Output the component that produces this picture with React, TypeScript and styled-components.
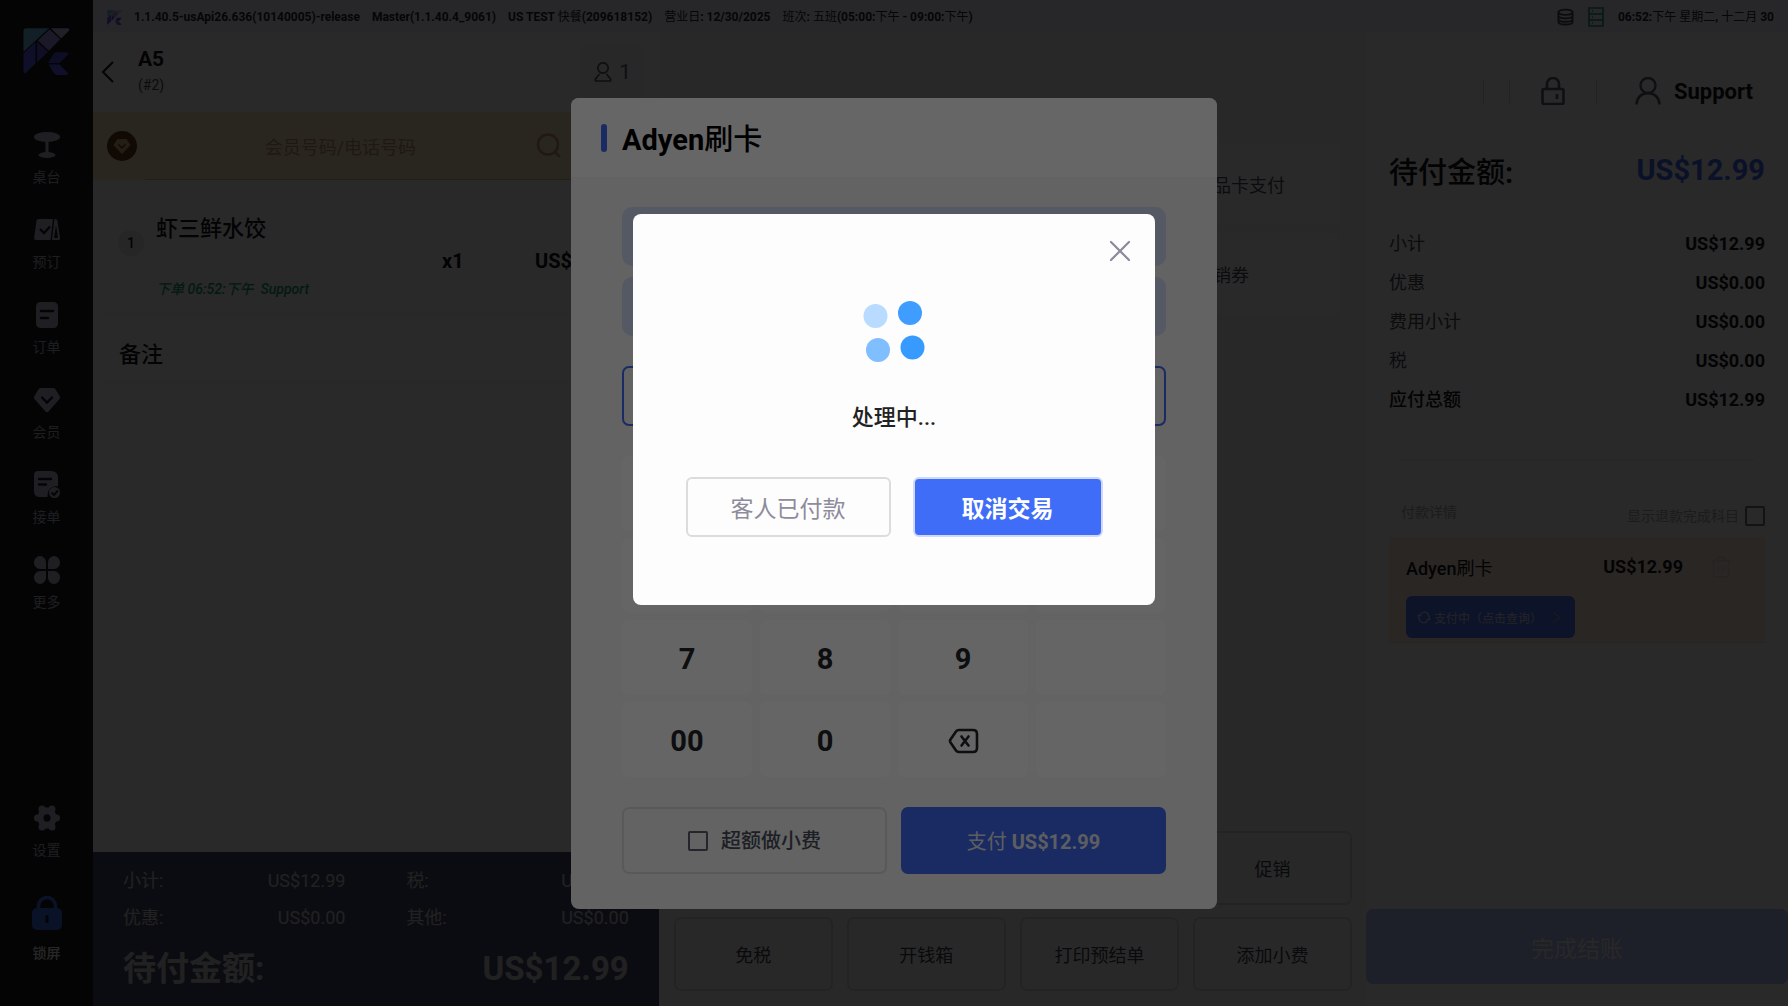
import React from "react";
import styled, { createGlobalStyle, css } from "styled-components";

const blue = "#406cf6";

const GlobalStyle = createGlobalStyle`
  * { box-sizing: border-box; }
  body {
    margin: 0;
    background: #f9f9f9;
    color: #14151a;
    font-family: Roboto, "Noto Sans CJK SC", sans-serif;
    font-size: 18px;
  }
  button, input { font: inherit; color: inherit; }
  button { border: 0; padding: 0; background: none; cursor: pointer; }
  h1, h2, p, dl, dd, dt { margin: 0; font-weight: inherit; font-size: inherit; }
  svg { display: block; flex: none; }
`;

/* Bold Latin text whose Han characters stay in a lighter weight */
const Han = styled.span<{ $weight: number }>`
  font-weight: ${(p) => p.$weight};
`;
const Mixed = ({ text, weight = 400 }: { text: string; weight?: number }) => (
  <span>
    {text.split(/([\u4e00-\u9fff]+)/).map((part, i) =>
      i % 2 ? <Han key={i} $weight={weight}>{part}</Han> : part
    )}
  </span>
);

const Shell = styled.div`
  display: grid;
  grid-template-columns: 93px 1fr;
  min-height: 100vh;
`;

/* Sidebar */
const Sidebar = styled.nav`
  display: flex;
  flex-direction: column;
  align-items: center;
  padding: 28px 0 43px;
  background: #1b1b1d;
`;
const NavGroup = styled.div<{ $bottom?: boolean }>`
  display: flex;
  flex-direction: column;
  align-items: center;
  gap: ${(p) => (p.$bottom ? 36 : 29)}px;
  margin-top: ${(p) => (p.$bottom ? "auto" : "56px")};
`;
const NavItem = styled.button<{ $strong?: boolean }>`
  display: flex;
  flex-direction: column;
  align-items: center;
  gap: ${(p) => (p.$strong ? 13 : 8)}px;
  font-size: 14px;
  line-height: 20px;
  font-weight: ${(p) => (p.$strong ? 500 : 400)};
  color: ${(p) => (p.$strong ? "#f0f0f0" : "#b4b8c8")};
`;

/* Workspace */
const Workspace = styled.div`
  display: grid;
  grid-template-rows: 32px 1fr;
  min-width: 0;
`;
const TopBar = styled.header`
  display: flex;
  align-items: center;
  gap: 12px;
  padding: 2px 14px 0;
  background: #eef0fb;
  font-size: 12px;
  line-height: 16px;
  font-weight: 700;
  color: #24252c;
  white-space: nowrap;
`;
const TopRight = styled.div`
  display: flex;
  align-items: center;
  gap: 14px;
  margin-left: auto;
`;
const Columns = styled.div`
  display: grid;
  grid-template-columns: 4fr 5fr 422px;
  min-height: 0;
`;

/* Order column */
const OrderPane = styled.section`
  display: flex;
  flex-direction: column;
  background: #fbfbfb;
`;
const OrderHead = styled.div`
  display: flex;
  align-items: center;
  height: 80px;
  padding-right: 14px;
`;
const BackButton = styled.button`
  width: 45px;
  padding-left: 8px;
`;
const TableName = styled.h1`
  font-size: 21px;
  line-height: 26px;
  font-weight: 700;
`;
const TableSub = styled.p`
  font-size: 14px;
  line-height: 26px;
  color: #4a4d5a;
`;
const GuestChip = styled.button`
  display: flex;
  align-items: center;
  justify-content: center;
  gap: 7px;
  width: 64px;
  height: 52px;
  margin-left: auto;
  border-radius: 6px;
  background: #f6f6f7;
  font-size: 21px;
  color: #5a5c6c;
`;
const MemberBar = styled.div`
  display: flex;
  align-items: center;
  height: 68px;
  padding: 0 98px 0 14px;
  background: #faeac6;
  color: #c8966a;
`;
const MemberField = styled.label`
  display: flex;
  flex: 1;
  align-items: center;
  height: 68px;
  margin-left: 8px;
  margin-right: -98px;
  padding-right: 98px;
  border-bottom: 1px solid #d9c08a;
`;
const MemberInput = styled.input`
  flex: 1;
  min-width: 0;
  border: 0;
  outline: 0;
  padding: 4px 0 0;
  background: none;
  text-align: center;
  line-height: 26px;
  &::placeholder { color: #c8966a; opacity: 1; }
`;
const OrderItem = styled.article`
  display: flex;
  gap: 12px;
  height: 134px;
  margin-left: 11px;
  padding: 34px 35px 0 14px;
  border-bottom: 1px solid #efefef;
`;
const ItemIndex = styled.span`
  flex: none;
  width: 26px;
  height: 26px;
  margin-top: 16px;
  border-radius: 50%;
  background: #e9e9eb;
  text-align: center;
  font-size: 14px;
  font-weight: 500;
  line-height: 26px;
`;
const ItemBody = styled.div`
  flex: 1;
`;
const ItemName = styled.h2`
  font-size: 22px;
  line-height: 30px;
  font-weight: 500;
`;
const ItemFigures = styled.p`
  display: flex;
  justify-content: flex-end;
  font-size: 20px;
  line-height: 34px;
  font-weight: 700;
  span:last-child { width: 160px; text-align: right; }
`;
const ItemMeta = styled.p`
  font-size: 14px;
  line-height: 22px;
  font-style: italic;
  font-weight: 500;
  color: #14a078;
`;
const Remark = styled.button`
  height: 69px;
  margin-left: 11px;
  padding: 8px 0 0 15px;
  background: #ffffff;
  border-bottom: 1px solid #f1f1f1;
  text-align: left;
  font-size: 22px;
  font-weight: 500;
`;
const OrderTotals = styled.div`
  margin-top: auto;
  padding: 10px 30px 4px 30px;
  background: #484e69;
  color: #cfcfd2;
`;
const TotalsGrid = styled.dl`
  display: grid;
  grid-template-columns: 1fr 1fr;
  column-gap: 61px;
`;
const Pair = styled.div<{ $grand?: boolean }>`
  display: flex;
  justify-content: space-between;
  line-height: 37px;
  ${(p) =>
    p.$grand &&
    css`
      grid-column: 1 / -1;
      font-size: 33px;
      line-height: 66px;
      font-weight: 700;
    `}
`;

/* Payment method column */
const MethodPane = styled.section`
  display: flex;
  flex-direction: column;
  justify-content: space-between;
  padding: 111px 14px 15px 15px;
  background: #f9f9f9;
`;
const MethodCards = styled.div`
  display: grid;
  grid-auto-rows: 82px;
  gap: 8px;
  width: 198px;
  margin: 0 13px 0 auto;
`;
const MethodCard = styled.button`
  display: flex;
  align-items: center;
  gap: 12px;
  padding-left: 18px;
  border-radius: 8px;
  background: #ffffff;
  color: #4a4d5a;
`;
const ActionGrid = styled.div`
  display: grid;
  grid-template-columns: repeat(4, 1fr);
  grid-auto-rows: 74px;
  gap: 12px 14px;
`;
const ActionButton = styled.button<{ $col?: number }>`
  grid-column: ${(p) => p.$col ?? "auto"};
  border: 2px solid #d9dadd;
  border-radius: 7px;
  color: #3c3f48;
`;

/* Summary column */
const SummaryPane = styled.section`
  display: flex;
  flex-direction: column;
  background: #fbfbfb;
  padding-bottom: 22px;
`;
const AccountBar = styled.div`
  display: flex;
  align-items: center;
  justify-content: flex-end;
  height: 118px;
  padding-right: 35px;
`;
const Rule = styled.span`
  width: 1px;
  height: 24px;
  background: #d4d4d8;
`;
const LockButton = styled.button`
  padding: 0 31px;
  color: #5c6074;
`;
const RuleGap = styled(Rule)`
  margin-right: 25px;
`;
const AccountButton = styled.button`
  display: flex;
  align-items: center;
  gap: 13px;
  margin-left: 38px;
  font-size: 22px;
  font-weight: 700;
  svg { color: #5c6074; }
`;
const SummaryBody = styled.div`
  padding: 0 23px;
`;
const Due = styled.div`
  display: flex;
  justify-content: space-between;
  font-size: 29px;
  font-weight: 700;
`;
const DueLabel = styled.span`
  line-height: 46px;
`;
const DueAmount = styled.span`
  line-height: 40px;
  color: ${blue};
`;
const Lines = styled.dl`
  margin: 28px 0 40px;
`;
const Line = styled.div<{ $strong?: boolean }>`
  display: flex;
  justify-content: space-between;
  line-height: 39px;
  dt { color: ${(p) => (p.$strong ? "#14151a" : "#4a4d55")}; font-weight: ${(p) => (p.$strong ? 500 : 400)}; }
  dd { font-weight: 700; }
`;
const Separator = styled.hr`
  height: 2px;
  margin: 0 11px 40px;
  border: 0;
  background: #eeeeee;
`;
const DetailHead = styled.div`
  display: flex;
  justify-content: space-between;
  padding-left: 12px;
  margin-bottom: 6px;
  font-size: 14px;
  line-height: 22px;
  color: #a9abb4;
`;
const RefundToggle = styled.label`
  display: flex;
  align-items: center;
  gap: 6px;
  line-height: 30px;
`;
const Check = styled.input<{ $tone: string }>`
  appearance: none;
  width: 20px;
  height: 20px;
  margin: 0;
  border: 2px solid ${(p) => p.$tone};
  border-radius: 2px;
`;
const PaymentCard = styled.div`
  padding: 0 34px 4px 17px;
  border-bottom: 1px solid #e2e2e2;
  background: #ffeadb;
`;
const PaymentRow = styled.div`
  display: flex;
  align-items: center;
  height: 59px;
  font-weight: 700;
  > span:first-child { font-weight: 500; }
  > span + span { margin-left: auto; }
  button { margin-left: 28px; color: #e3dbd6; }
`;
const QueryButton = styled.button`
  display: flex;
  align-items: center;
  gap: 3px;
  width: 169px;
  height: 42px;
  padding: 0 14px 0 11px;
  border-radius: 6px;
  background: #5074f4;
  color: #c9d2f4;
  font-size: 12px;
  font-weight: 500;
  svg:last-child { margin-left: auto; }
`;
const FinishButton = styled.button`
  height: 75px;
  margin-top: auto;
  border-radius: 7px;
  background: #b5c2fa;
  color: #f4f4f2;
  font-size: 23px;
`;

/* Overlays */
const Scrim = styled.div<{ $top?: boolean }>`
  position: fixed;
  inset: 0;
  display: flex;
  justify-content: center;
  align-items: ${(p) => (p.$top ? "flex-start" : "center")};
  padding-top: ${(p) => (p.$top ? 214 : 0)}px;
  background: rgba(0, 0, 0, 0.6);
`;
const PayModal = styled.section`
  width: 646px;
  border-radius: 8px;
  overflow: hidden;
  background: #f7f7f7;
`;
const PayHead = styled.header`
  display: flex;
  align-items: center;
  gap: 15px;
  height: 79px;
  padding: 2px 30px 0;
  background: #ffffff;
  &::before {
    content: "";
    width: 6px;
    height: 28px;
    border-radius: 3px;
    background: ${blue};
  }
`;
const PayTitle = styled.h1`
  padding-top: 4px;
  font-size: 29px;
  line-height: 42px;
  font-weight: 700;
  color: #000000;
`;
const PayBody = styled.div`
  display: flex;
  flex-direction: column;
  gap: 30px;
  padding: 30px 51px 35px;
`;
const InfoRows = styled.div`
  display: grid;
  grid-auto-rows: 59px;
  gap: 11px;
`;
const InfoRow = styled.div`
  border-radius: 10px;
  background: #d5dffa;
`;
const AmountInput = styled.input`
  width: 100%;
  height: 60px;
  padding: 0 20px;
  border: 2px solid ${blue};
  border-radius: 7px;
  background: #f7f7f7;
`;
const Keypad = styled.div`
  display: grid;
  grid-template-columns: repeat(4, 1fr);
  grid-auto-rows: 75px;
  gap: 7px 8px;
`;
const Key = styled.button`
  display: flex;
  align-items: center;
  justify-content: center;
  padding-top: 4px;
  border-radius: 7px;
  background: #fdfdfd;
  font-size: 29px;
  font-weight: 700;
  color: #22242a;
`;
const PayActions = styled.div`
  display: grid;
  grid-template-columns: 1fr 1fr;
  gap: 14px;
  font-size: 20px;
  line-height: 30px;
`;
const TipToggle = styled.label`
  display: flex;
  align-items: center;
  justify-content: center;
  gap: 13px;
  height: 67px;
  padding-top: 2px;
  border: 2px solid #dfdfdf;
  border-radius: 7px;
  font-weight: 500;
  color: #4a4f5c;
`;
const PayButton = styled.button`
  padding-top: 4px;
  border-radius: 7px;
  background: ${blue};
  color: #e9ebf2;
  font-weight: 700;
`;

const Dialog = styled.section`
  display: flex;
  flex-direction: column;
  align-items: center;
  width: 522px;
  padding: 26px 24px 68px;
  border-radius: 8px;
  background: #fdfdfd;
`;
const CloseButton = styled.button`
  align-self: flex-end;
  color: #8c8a9c;
`;
const Spinner = styled.svg`
  margin: 38px 0 38px;
`;
const Status = styled.p`
  font-size: 22px;
  line-height: 36px;
  font-weight: 500;
  color: #222222;
`;
const DialogActions = styled.div`
  display: flex;
  gap: 22px;
  margin-top: 41px;
`;
const DialogButton = styled.button<{ $primary?: boolean }>`
  width: ${(p) => (p.$primary ? 190 : 205)}px;
  height: 60px;
  border: 2px solid ${(p) => (p.$primary ? "#cfd8f6" : "#dcdcde")};
  border-radius: 6px;
  background: ${(p) => (p.$primary ? "#3f6df7" : "#fdfdfd")};
  color: ${(p) => (p.$primary ? "#ffffff" : "#8e8c9c")};
  font-size: 23px;
  font-weight: ${(p) => (p.$primary ? 700 : 400)};
`;

/* Drawings */
const Logo = ({ size }: { size: number }) => (
  <svg width={size} height={size} viewBox="69 83 139 142" aria-hidden="true">
    <path d="M78 84H146L69 155V93Q69 84 78 84Z" fill="#78bfe8" />
    <path d="M148 87L180 117L146 152L112 121Z" fill="#a993ee" />
    <path d="M152 84H203Q210 86 206 91L183 115Z" fill="#cfc0f2" />
    <path d="M69 160L105 125V190L75 220Q69 223 69 215Z" fill="#6260fb" />
    <path d="M110 125L143 155L110 187Z" fill="#6458ea" />
    <path d="M168 156H199Q208 158 203 164L178 189H143L158 164Q162 157 168 156Z" fill="#5350e6" />
    <path d="M145 193H178L202 218Q207 224 198 225H172Q165 225 160 218Z" fill="#6260fb" />
  </svg>
);
const fillTone = "#bdc1d6";
const hole = "#1b1b1d";
const NavSvg = ({ children }: { children: React.ReactNode }) => (
  <svg width="28" height="28" viewBox="0 0 28 28" fill={fillTone} aria-hidden="true">{children}</svg>
);
const TableIcon = () => (
  <NavSvg>
    <ellipse cx="14" cy="6" rx="13" ry="5" />
    <rect x="12.5" y="9" width="3" height="15" />
    <ellipse cx="14" cy="24" rx="8.5" ry="3" />
  </NavSvg>
);
const BookIcon = () => (
  <NavSvg>
    <path d="M5.500 3H20l-2.500 21H3Q1 24 1.200 22L3.500 4.500Q4 3 5.500 3Z" />
    <path d="M21.500 3h1q1.500 0 1.800 1.500L27 22q.2 2-1.500 2H19Z" />
    <path d="M23 9l2 13h-4Z" fill={hole} />
    <path d="M7 13l4 4 6-6.500" fill="none" stroke={hole} strokeWidth="2.400" />
  </NavSvg>
);
const OrderIcon = () => (
  <NavSvg>
    <path d="M8 1H20q5 0 5 5V22q0 5-5 5H8q-5 0-5-5V6Q3 1 8 1Z" />
    <path d="M8 10H20M8 17H15" fill="none" stroke={hole} strokeWidth="2.600" strokeLinecap="round" />
  </NavSvg>
);
const Gem = ({ size, tone, mark }: { size: number; tone: string; mark: string }) => (
  <svg width={size} height={size} viewBox="0 0 28 28" aria-hidden="true">
    <path d="M8 2H20q1.500 0 2.300 1L26.500 10q1 1.500 0 3L15.500 25.500q-1.500 1.500-3 0L1.500 13q-1-1.500 0-3L5.700 3Q6.500 2 8 2Z" fill={tone} />
    <path d="M9 11.500l5 5 5-5" fill="none" stroke={mark} strokeWidth="2.400" strokeLinecap="round" />
  </svg>
);
const TakeIcon = () => (
  <NavSvg>
    <path d="M5 0H18q7 0 7 7V15Q14 15 14.500 26H7q-6 0-6-6V4Q1 0 5 0Z" />
    <path d="M6 8H18M6 13.500H13" fill="none" stroke={hole} strokeWidth="2.400" strokeLinecap="round" />
    <circle cx="21.500" cy="21.500" r="5.500" />
    <path d="M18.500 21.500l2.500 2.500 4-4.500" fill="none" stroke={hole} strokeWidth="2" />
  </NavSvg>
);
const MoreIcon = () => (
  <NavSvg>
    <path d="M13 13H7A6 6.500 0 1 1 13 6.500Z" />
    <path d="M15 13H21A6 6.500 0 1 0 15 6.500Z" />
    <path d="M13 15H7A6 6.500 0 1 0 13 21.500Z" />
    <path d="M15 15H21A6 6.500 0 1 1 15 21.500Z" />
  </NavSvg>
);
const GearIcon = () => (
  <NavSvg>
    <path
      d="M9.500 5.500H18.500L22.500 14L18.500 22.500H9.500L5.500 14Z"
      stroke={fillTone}
      strokeWidth="4"
      strokeLinejoin="round"
    />
    <circle cx="9" cy="5" r="3.500" />
    <circle cx="19" cy="5" r="3.500" />
    <circle cx="9" cy="23" r="3.500" />
    <circle cx="19" cy="23" r="3.500" />
    <circle cx="4.500" cy="14" r="3.500" />
    <circle cx="23.500" cy="14" r="3.500" />
    <ellipse cx="14" cy="14" rx="3.500" ry="3.800" fill={hole} />
  </NavSvg>
);
const BigLock = () => (
  <svg width="32" height="34" viewBox="0 0 32 34" aria-hidden="true">
    <path d="M7.500 14V10a8.500 8.500 0 0 1 17 0v4" fill="none" stroke="#4070f4" strokeWidth="3.500" />
    <rect x="1" y="12" width="30" height="22" rx="5" fill="#4070f4" />
    <rect x="14.500" y="19" width="3" height="8" rx="1.500" fill={hole} />
  </svg>
);

const navItems = [
  { label: "桌台", icon: <TableIcon /> },
  { label: "预订", icon: <BookIcon /> },
  { label: "订单", icon: <OrderIcon /> },
  { label: "会员", icon: <Gem size={28} tone={fillTone} mark={hole} /> },
  { label: "接单", icon: <TakeIcon /> },
  { label: "更多", icon: <MoreIcon /> },
];
const statusTexts = [
  "1.1.40.5-usApi26.636(10140005)-release",
  "Master(1.1.40.4_9061)",
  "US TEST 快餐(209618152)",
  "营业日: 12/30/2025",
  "班次: 五班(05:00:下午 - 09:00:下午)",
];
const orderTotals = [
  ["小计:", "US$12.99"],
  ["税:", "US$0.00"],
  ["优惠:", "US$0.00"],
  ["其他:", "US$0.00"],
];
const summaryLines = [
  ["小计", "US$12.99"],
  ["优惠", "US$0.00"],
  ["费用小计", "US$0.00"],
  ["税", "US$0.00"],
  ["应付总额", "US$12.99"],
];
const keys = ["1", "2", "3", "", "4", "5", "6", "", "7", "8", "9", "", "00", "0", "back", ""];

const BackspaceIcon = () => (
  <svg width="31" height="26" viewBox="0 0 31 26" fill="none" stroke="currentColor" strokeWidth="2.600" strokeLinejoin="round" strokeLinecap="round" aria-hidden="true">
    <path d="M11 2H25q4 0 4 4V20q0 4-4 4H11q-2 0-3-1.500L2.500 14.500q-1-1.500 0-3L8 3.500Q9 2 11 2Z" />
    <path d="M13.500 8.500l7 9M20.500 8.500l-7 9" />
  </svg>
);
const CardIcon = () => (
  <svg width="24" height="24" viewBox="0 0 24 24" fill="none" stroke={blue} strokeWidth="2" aria-hidden="true">
    <rect x="2" y="5" width="20" height="14" rx="2" />
    <path d="M2 10H22" />
  </svg>
);

export default function App() {
  return (
    <>
      <GlobalStyle />
      <Shell>
        <Sidebar>
          <Logo size={47} />
          <NavGroup>
            {navItems.map((n) => (
              <NavItem key={n.label}>{n.icon}{n.label}</NavItem>
            ))}
          </NavGroup>
          <NavGroup $bottom>
            <NavItem><GearIcon />设置</NavItem>
            <NavItem $strong><BigLock />锁屏</NavItem>
          </NavGroup>
        </Sidebar>

        <Workspace>
          <TopBar>
            <Logo size={15} />
            {statusTexts.map((t) => <Mixed key={t} text={t} />)}
            <TopRight>
              <svg width="17" height="18" viewBox="0 0 18 18" fill="none" stroke="#4c4c4c" strokeWidth="2" aria-hidden="true">
                <ellipse cx="9" cy="4" rx="7.500" ry="2.800" />
                <path d="M1.500 4V14q0 3 7.500 3t7.500-3V4M1.500 7.500q0 3 7.500 3t7.500-3M1.500 11q0 3 7.500 3t7.500-3" />
              </svg>
              <svg width="16" height="20" viewBox="0 0 16 20" fill="none" stroke="#1f9a80" strokeWidth="1.600" aria-hidden="true">
                <path d="M1 1H15V19H1ZM1 7H15M1 13H15M4 4H5M4 10H5M4 16H5" />
              </svg>
              <Mixed text="06:52:下午 星期二, 十二月 30" />
            </TopRight>
          </TopBar>

          <Columns>
            <OrderPane>
              <OrderHead>
                <BackButton aria-label="返回">
                  <svg width="13" height="22" viewBox="0 0 13 22" fill="none" stroke="#14151a" strokeWidth="2" aria-hidden="true">
                    <path d="M12 1L2 11L12 21" />
                  </svg>
                </BackButton>
                <div>
                  <TableName>A5</TableName>
                  <TableSub>(#2)</TableSub>
                </div>
                <GuestChip>
                  <svg width="18" height="20" viewBox="0 0 18 20" fill="none" stroke="currentColor" strokeWidth="1.700" aria-hidden="true">
                    <circle cx="9" cy="6" r="5.200" />
                    <path d="M5.500 12L1.500 17Q.5 19 2.500 19H15.500Q17.500 19 16.500 17L12.500 12" />
                  </svg>
                  1
                </GuestChip>
              </OrderHead>
              <MemberBar>
                <svg width="30" height="30" viewBox="0 0 30 30" aria-hidden="true">
                  <circle cx="15" cy="15" r="15" fill="#6a3a1a" />
                  <path d="M10.500 8H19.500L23.500 14L15 23L6.500 14Z" fill="#d8b878" />
                  <path d="M11.500 13.500l3.500 3.500 3.500-3.500" fill="none" stroke="#6a3a1a" strokeWidth="1.500" />
                </svg>
                <MemberField>
                  <MemberInput placeholder="会员号码/电话号码" aria-label="会员号码/电话号码" />
                  <svg width="25" height="25" viewBox="0 0 25 25" fill="none" stroke="currentColor" strokeWidth="2.400" aria-hidden="true">
                    <circle cx="12" cy="11.500" r="10" />
                    <path d="M19 19L24 24" />
                  </svg>
                </MemberField>
              </MemberBar>
              <OrderItem>
                <ItemIndex>1</ItemIndex>
                <ItemBody>
                  <ItemName>虾三鲜水饺</ItemName>
                  <ItemFigures><span>x1</span><span>US$12.99</span></ItemFigures>
                  <ItemMeta>下单 06:52:下午&nbsp; Support</ItemMeta>
                </ItemBody>
              </OrderItem>
              <Remark>备注</Remark>
              <OrderTotals>
                <TotalsGrid>
                  {orderTotals.map(([k, v]) => (
                    <Pair key={k}><dt>{k}</dt><dd>{v}</dd></Pair>
                  ))}
                  <Pair $grand><dt>待付金额:</dt><dd>US$12.99</dd></Pair>
                </TotalsGrid>
              </OrderTotals>
            </OrderPane>

            <MethodPane>
              <MethodCards>
                <MethodCard><CardIcon />礼品卡支付</MethodCard>
                <MethodCard><CardIcon />核销券</MethodCard>
              </MethodCards>
              <ActionGrid>
                <ActionButton $col={4}>促销</ActionButton>
                <ActionButton>免税</ActionButton>
                <ActionButton>开钱箱</ActionButton>
                <ActionButton>打印预结单</ActionButton>
                <ActionButton>添加小费</ActionButton>
              </ActionGrid>
            </MethodPane>

            <SummaryPane>
              <AccountBar>
                <RuleGap />
                <Rule />
                <LockButton aria-label="锁定">
                  <svg width="24" height="28" viewBox="0 0 24 28" fill="none" stroke="currentColor" strokeWidth="2.600" aria-hidden="true">
                    <rect x="1.500" y="12" width="21" height="15" rx="1.500" />
                    <path d="M6 12V7a6 6 0 0 1 12 0v5M16 17V22" />
                  </svg>
                </LockButton>
                <Rule />
                <AccountButton>
                  <svg width="26" height="28" viewBox="0 0 26 28" fill="none" stroke="currentColor" strokeWidth="2.400" aria-hidden="true">
                    <ellipse cx="13" cy="8.500" rx="7.500" ry="7.500" />
                    <path d="M1.500 27.500Q2 17 13 16Q24 17 24.500 27.500" />
                  </svg>
                  Support
                </AccountButton>
              </AccountBar>
              <SummaryBody>
                <Due>
                  <DueLabel><Mixed text="待付金额:" weight={500} /></DueLabel>
                  <DueAmount>US$12.99</DueAmount>
                </Due>
                <Lines>
                  {summaryLines.map(([k, v], i) => (
                    <Line key={k} $strong={i === 4}><dt>{k}</dt><dd>{v}</dd></Line>
                  ))}
                </Lines>
                <Separator />
                <DetailHead>
                  <span>付款详情</span>
                  <RefundToggle>显示退款完成科目<Check type="checkbox" $tone="#6f7486" /></RefundToggle>
                </DetailHead>
                <PaymentCard>
                  <PaymentRow>
                    <Mixed text="Adyen刷卡" />
                    <span>US$12.99</span>
                    <button aria-label="删除">
                      <svg width="20" height="22" viewBox="0 0 20 22" fill="none" stroke="currentColor" strokeWidth="1.800" aria-hidden="true">
                        <path d="M0 5H20M5 5Q6 1 10 1T15 5M2.500 5V19Q2.500 21 4.500 21H15.500Q17.500 21 17.500 19V5M7.500 10V16M12.500 10V16" />
                      </svg>
                    </button>
                  </PaymentRow>
                  <QueryButton>
                    <svg width="14" height="13" viewBox="0 0 14 13" fill="none" stroke="currentColor" strokeWidth="1.500" aria-hidden="true">
                      <path d="M3 3.500Q7-1 11 3Q12.500 5 12.500 8.500M11 9.500Q7 14 3 10Q1.500 8 1.500 4.500" />
                      <path d="M9.500 8.500H13.500M.5 4.500H4.500" />
                    </svg>
                    支付中（点击查询）
                    <svg width="9" height="13" viewBox="0 0 9 13" fill="none" stroke="#8e98c4" strokeWidth="1.600" aria-hidden="true">
                      <path d="M1 1L8 6.500L1 12" />
                    </svg>
                  </QueryButton>
                </PaymentCard>
              </SummaryBody>
              <FinishButton>完成结账</FinishButton>
            </SummaryPane>
          </Columns>
        </Workspace>
      </Shell>

      <Scrim>
        <PayModal role="dialog" aria-label="Adyen刷卡">
          <PayHead><PayTitle><Mixed text="Adyen刷卡" weight={500} /></PayTitle></PayHead>
          <PayBody>
            <InfoRows><InfoRow /><InfoRow /></InfoRows>
            <AmountInput aria-label="金额" />
            <Keypad>
              {keys.map((k, i) => (
                <Key key={i} aria-label={k || "空"}>{k === "back" ? <BackspaceIcon /> : i < 8 ? null : k}</Key>
              ))}
            </Keypad>
            <PayActions>
              <TipToggle><Check type="checkbox" $tone="#5a5f6c" />超额做小费</TipToggle>
              <PayButton><Mixed text="支付 US$12.99" /></PayButton>
            </PayActions>
          </PayBody>
        </PayModal>
      </Scrim>

      <Scrim $top>
        <Dialog role="dialog" aria-label="处理中">
          <CloseButton aria-label="关闭">
            <svg width="22" height="22" viewBox="0 0 22 22" fill="none" stroke="currentColor" strokeWidth="2.200" strokeLinecap="round" aria-hidden="true">
              <path d="M2 2L20 20M20 2L2 20" />
            </svg>
          </CloseButton>
          <Spinner width="62" height="62" viewBox="0 0 62 62" aria-hidden="true">
            <circle cx="12.500" cy="16" r="12" fill="#b8dbff" />
            <circle cx="47" cy="13" r="12" fill="#3f9dff" />
            <circle cx="15" cy="50" r="12" fill="#7fbeff" />
            <circle cx="49.500" cy="47.500" r="12" fill="#369aff" />
          </Spinner>
          <Status>处理中...</Status>
          <DialogActions>
            <DialogButton>客人已付款</DialogButton>
            <DialogButton $primary>取消交易</DialogButton>
          </DialogActions>
        </Dialog>
      </Scrim>
    </>
  );
}
